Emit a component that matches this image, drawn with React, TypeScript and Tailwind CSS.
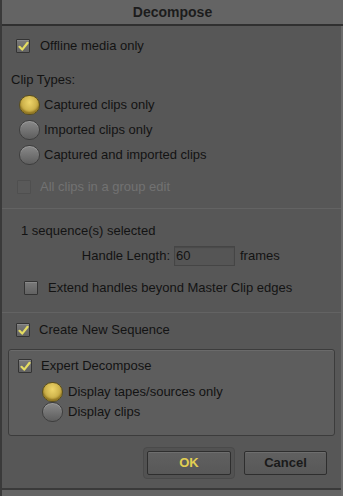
import React from 'react';

function Check({ checked = false, disabled = false }: { checked?: boolean; disabled?: boolean }) {
  return (
    <span
      className={
        'w-[14px] h-[14px] shrink-0 flex items-center justify-center rounded-[1px] border ' +
        (disabled
          ? 'border-[#4f4f4f] bg-[#595959]'
          : 'border-[#333333] bg-linear-to-b from-[#7a7a7a] to-[#626262] shadow-[inset_0_1px_0_#8a8a8a]')
      }
    >
      {checked && (
        <svg width="11" height="11" viewBox="0 0 11 11">
          <path d="M1.5 5.8 L4.2 8.6 L9.6 1.8" fill="none" stroke="#e4dc62" strokeWidth="2.2" strokeLinecap="round" strokeLinejoin="round" />
        </svg>
      )}
    </span>
  );
}

function Radio({ on = false }: { on?: boolean }) {
  return (
    <span
      className={
        'w-[21px] h-[20px] shrink-0 rounded-full border ' +
        (on
          ? 'border-[#5b4f1c] bg-radial-[at_50%_35%] from-[#eed56a] to-[#b09330] shadow-[inset_0_-2px_2px_#8f7422]'
          : 'border-[#3e3e3e] bg-linear-to-b from-[#8a8a8a] to-[#5e5e5e] shadow-[inset_0_1px_0_#999]')
      }
    />
  );
}

export default function App() {
  return (
    <div className="w-[343px] h-[496px] bg-[#575757] flex flex-col font-['Liberation_Sans',Arial,sans-serif] text-[13px] text-[#131313] border-l-2 border-[#3a3a3a] overflow-hidden">
      <div className="h-[26px] shrink-0 bg-[#646464] border-b-2 border-[#303030] flex items-center justify-center font-bold text-[14px] text-[#1c1c1c]">
        Decompose
      </div>

      <div className="flex flex-col border-r-2 border-[#6b6b6b] flex-1">
        <div className="mt-[11px] h-[18px] pl-[14px] flex items-center gap-[10px]">
          <Check checked />
          <span>Offline media only</span>
        </div>

        <div className="mt-[16px] h-[18px] pl-[9px] flex items-center">Clip Types:</div>

        <div className="mt-[6px] h-[20px] pl-[17px] flex items-center gap-[4px]">
          <Radio on />
          <span>Captured clips only</span>
        </div>
        <div className="mt-[5px] h-[20px] pl-[17px] flex items-center gap-[4px]">
          <Radio />
          <span>Imported clips only</span>
        </div>
        <div className="mt-[5px] h-[20px] pl-[17px] flex items-center gap-[4px]">
          <Radio />
          <span>Captured and imported clips</span>
        </div>

        <div className="mt-[13px] h-[18px] pl-[15px] flex items-center gap-[9px] text-[#727272]">
          <Check disabled />
          <span>All clips in a group edit</span>
        </div>

        <div className="mt-[12px] h-px bg-[#636363]" />

        <div className="mt-[13px] h-[18px] pl-[19px] flex items-center">1 sequence(s) selected</div>

        <div className="mt-[6px] h-[20px] flex items-center">
          <span className="w-[170px] text-right pr-[2px]">Handle Length:</span>
          <span className="ml-[2px] w-[61px] h-[20px] border border-[#454545] bg-[#555555] shadow-[inset_0_1px_1px_#4a4a4a] flex items-center pl-[1px]">
            60
          </span>
          <span className="ml-[5px]">frames</span>
        </div>

        <div className="mt-[13px] h-[18px] pl-[22px] flex items-center gap-[10px]">
          <Check />
          <span>Extend handles beyond Master Clip edges</span>
        </div>

        <div className="mt-[15px] h-px bg-[#636363]" />

        <div className="mt-[8px] h-[18px] pl-[14px] flex items-center gap-[9px]">
          <Check checked />
          <span>Create New Sequence</span>
        </div>

        <div className="mt-[10px] mx-[6px] h-[87px] rounded-[3px] border border-[#3c3c3c] bg-[#5d5d5d] shadow-[inset_0_1px_0_#6a6a6a] flex flex-col">
          <div className="mt-[7px] h-[18px] pl-[9px] flex items-center gap-[9px]">
            <Check checked />
            <span>Expert Decompose</span>
          </div>
          <div className="mt-[7px] h-[20px] pl-[33px] flex items-center gap-[5px]">
            <Radio on />
            <span>Display tapes/sources only</span>
          </div>
          <div className="h-[20px] pl-[33px] flex items-center gap-[5px]">
            <Radio />
            <span>Display clips</span>
          </div>
        </div>

        <div className="mt-[11px] flex justify-end pr-[14px] gap-[9px]">
          <div className="p-[3px] rounded-[4px] border border-[#4a4a4a] bg-[#525252]">
            <button className="w-[84px] h-[24px] rounded-[2px] border border-[#2e2e2e] bg-linear-to-b from-[#606060] to-[#585858] shadow-[inset_0_1px_0_#6e6e6e] font-bold text-[13px] text-[#e2cf52]">
              OK
            </button>
          </div>
          <div className="pt-[4px]">
            <button className="w-[83px] h-[24px] rounded-[2px] border border-[#2e2e2e] bg-linear-to-b from-[#606060] to-[#585858] shadow-[inset_0_1px_0_#6e6e6e] font-bold text-[13px] text-[#1a1a1a]">
              Cancel
            </button>
          </div>
        </div>

        <div className="flex-1" />
        <div className="h-[2px] bg-[#3a3a3a]" />
        <div className="h-[6px] bg-[#646464]" />
      </div>
    </div>
  );
}
